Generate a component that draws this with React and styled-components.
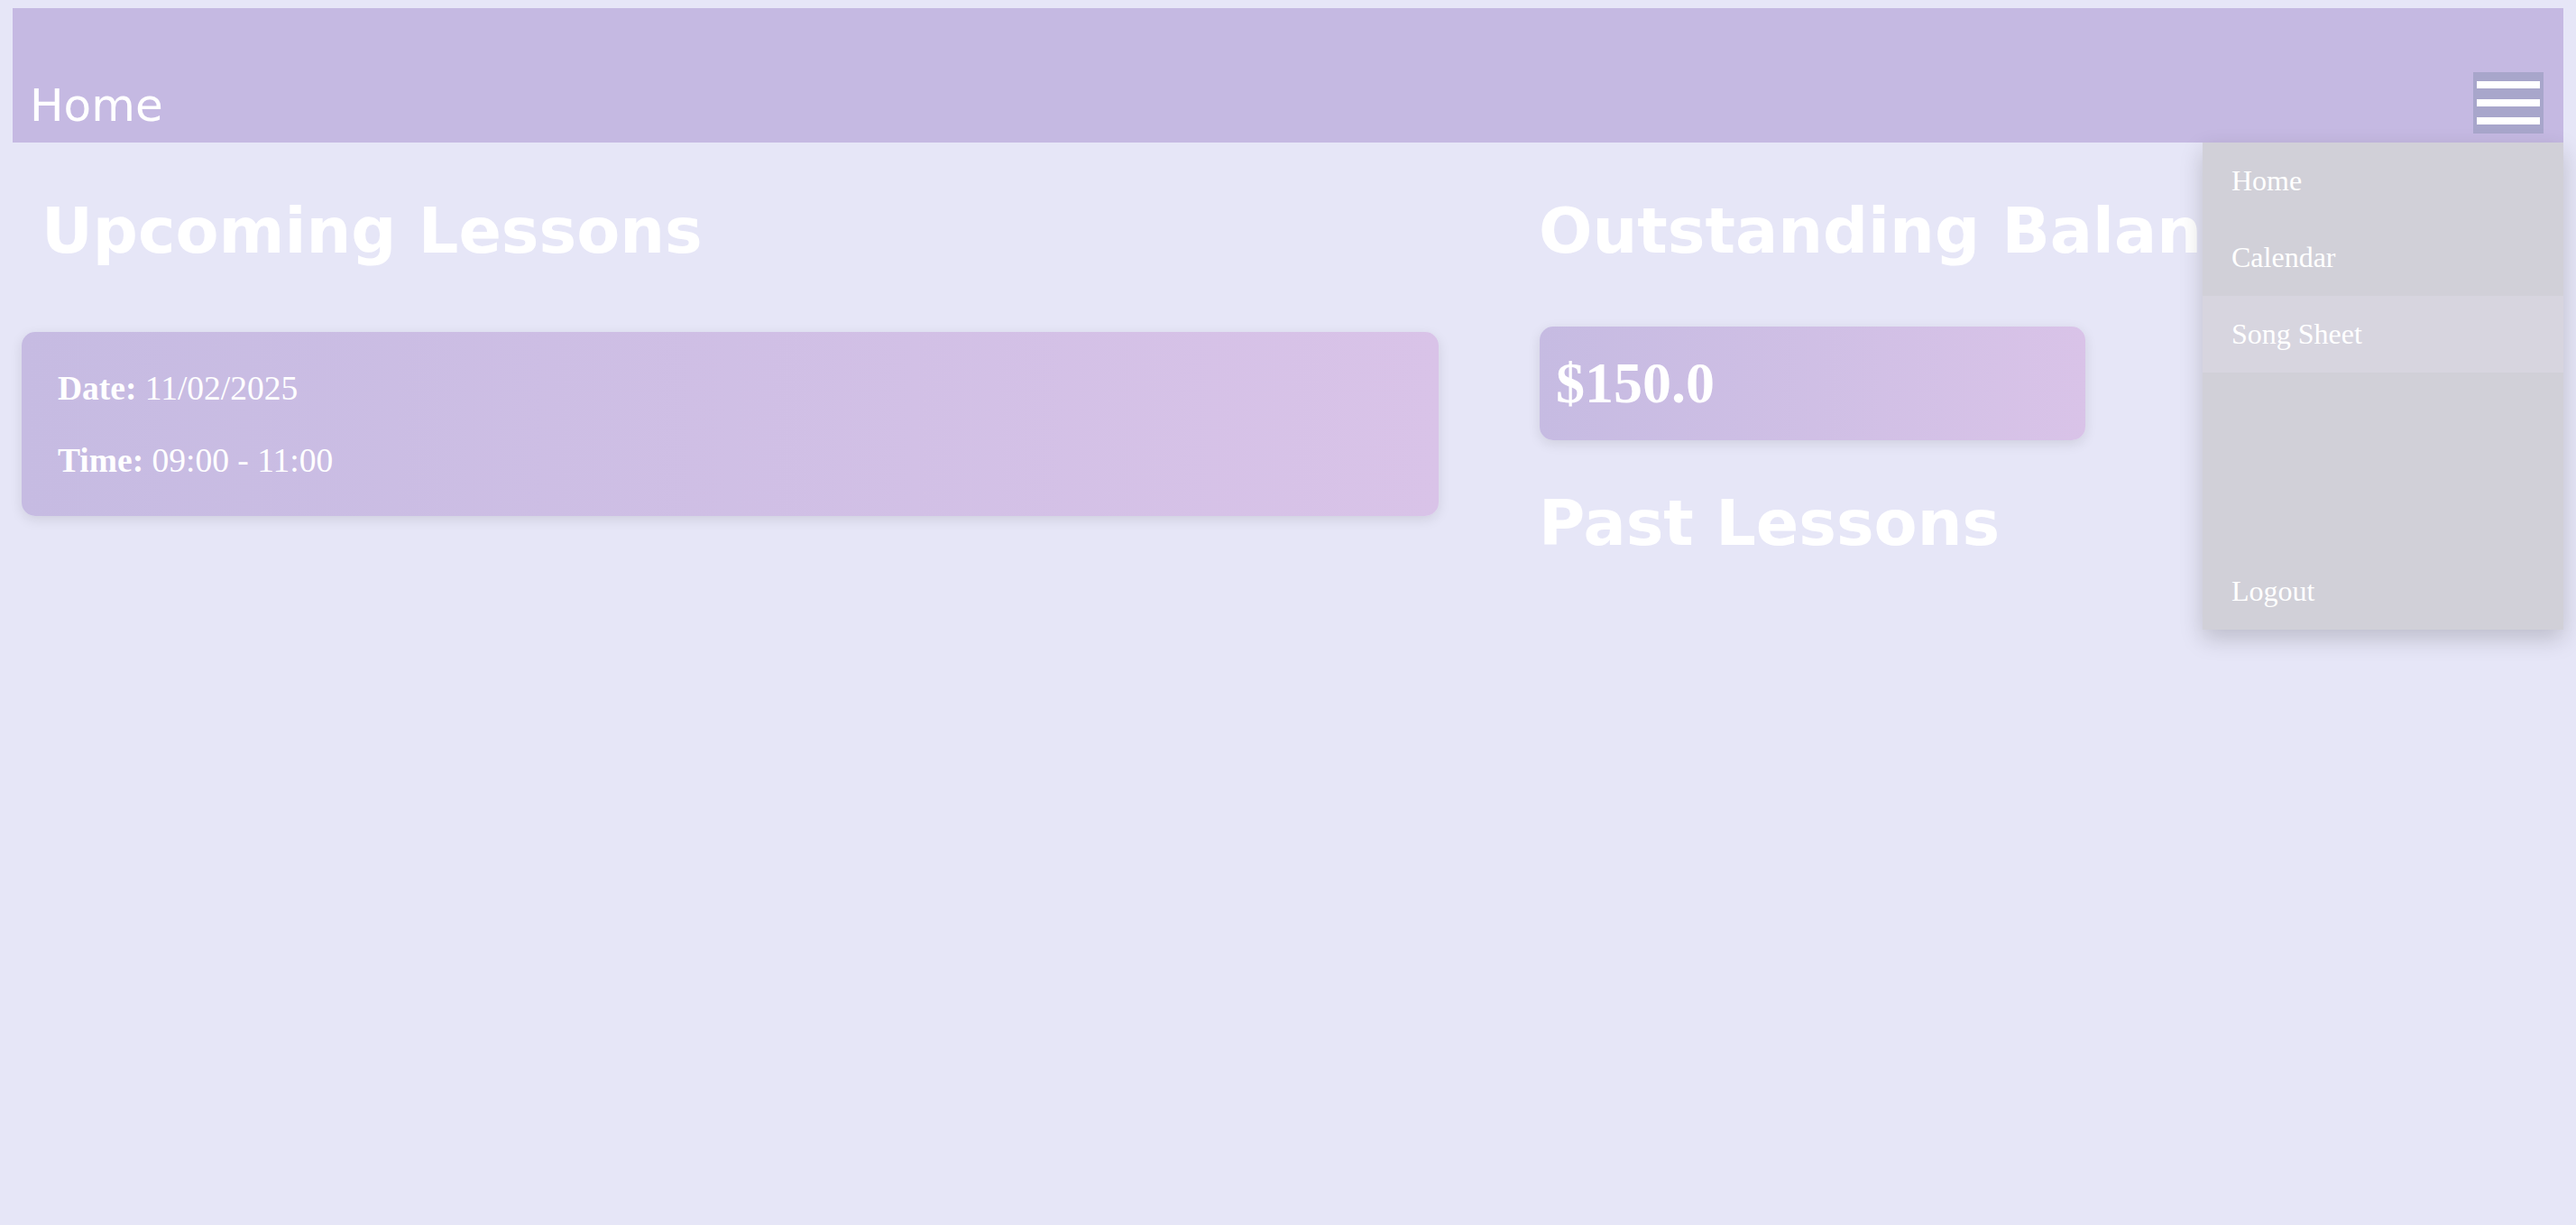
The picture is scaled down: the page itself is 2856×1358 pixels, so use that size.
import React, { useState } from 'react';
import styled, { createGlobalStyle } from 'styled-components';

const GlobalStyle = createGlobalStyle`
  html, body {
    margin: 0;
    padding: 0;
    background: #e6e6f7;
    min-height: 100vh;
  }
  body {
    font-family: "Liberation Serif", "Times New Roman", serif;
    color: white;
  }
`;

const menuItems = ['Home', 'Calendar', 'Song Sheet'];

const lessons = [
  { date: '11/02/2025', time: '09:00 - 11:00' },
];

export default function App() {
  const [hovered, setHovered] = useState('Song Sheet');

  return (
    <>
      <GlobalStyle />
      <Page>
        <Header>
          <Title>Home</Title>
          <MenuButton aria-label="menu">
            <Bar />
            <Bar />
            <Bar />
          </MenuButton>
          <Dropdown>
            {menuItems.map((item) => (
              <MenuItem
                key={item}
                $active={hovered === item}
                onMouseEnter={() => setHovered(item)}
              >
                {item}
              </MenuItem>
            ))}
            <MenuItem $bottom onMouseEnter={() => setHovered('Logout')} $active={hovered === 'Logout'}>
              Logout
            </MenuItem>
          </Dropdown>
        </Header>

        <Main>
          <Column>
            <Heading $indent>Upcoming Lessons</Heading>
            {lessons.map((l) => (
              <LessonCard key={l.date + l.time}>
                <LessonLine><b>Date:</b> {l.date}</LessonLine>
                <LessonLine><b>Time:</b> {l.time}</LessonLine>
              </LessonCard>
            ))}
          </Column>
          <Column>
            <Heading>Outstanding Balance</Heading>
            <BalanceCard>$150.0</BalanceCard>
            <Heading $top={51}>Past Lessons</Heading>
          </Column>
        </Main>
      </Page>
    </>
  );
}

const Page = styled.div`
  padding: 9px 14px 0;
  min-height: 100vh;
  box-sizing: border-box;
  overflow: hidden;
`;

const Header = styled.header`
  position: relative;
  display: flex;
  align-items: flex-end;
  justify-content: space-between;
  height: 149px;
  box-sizing: border-box;
  padding: 0 22px 10px 19px;
  background: #c5b9e2;
`;

const Title = styled.div`
  font-family: "DejaVu Sans", Verdana, sans-serif;
  font-size: 50px;
  line-height: normal;
  margin-bottom: 2px;
  color: white;
`;

const MenuButton = styled.button`
  display: flex;
  flex-direction: column;
  gap: 12px;
  width: 78px;
  height: 68px;
  box-sizing: border-box;
  padding: 10px 4px;
  border: none;
  background: #a8a6cb;
  cursor: pointer;
`;

const Bar = styled.span`
  display: block;
  width: 70px;
  height: 8px;
  background: white;
`;

const Dropdown = styled.nav`
  position: absolute;
  top: 100%;
  right: 0;
  width: 400px;
  height: 540px;
  display: flex;
  flex-direction: column;
  background: #d1d0d8;
  box-shadow: 0 10px 24px rgba(0, 0, 0, 0.18);
  z-index: 10;
`;

const MenuItem = styled.a`
  display: block;
  padding: 24px 32px;
  font-family: "Liberation Serif", "Times New Roman", serif;
  font-size: 32px;
  line-height: normal;
  color: white;
  background: ${(p) => (p.$active ? '#d7d5df' : 'transparent')};
  margin-top: ${(p) => (p.$bottom ? 'auto' : '0')};
  cursor: pointer;
`;

const Main = styled.main`
  display: grid;
  grid-template-columns: 1571px 1fr;
  column-gap: 111px;
  padding: 0 10px;
`;

const Column = styled.section`
  display: flex;
  flex-direction: column;
  align-items: flex-start;
  min-width: 0;
`;

const Heading = styled.h1`
  margin: ${(p) => p.$top ?? 57}px 0 0 ${(p) => (p.$indent ? 22 : 0)}px;
  font-family: "DejaVu Sans", Verdana, sans-serif;
  font-weight: bold;
  font-size: 70px;
  line-height: normal;
  white-space: nowrap;
  color: white;
`;

const LessonCard = styled.div`
  align-self: stretch;
  margin-top: 71px;
  padding: 4px 40px 3px;
  border-radius: 15px;
  background: linear-gradient(to right, #c6bbe2, #d9c3e8);
  box-shadow: 0 4px 14px rgba(0, 0, 0, 0.1);
`;

const LessonLine = styled.p`
  margin: 37px 0;
  font-size: 37.5px;
  line-height: normal;
`;

const BalanceCard = styled.div`
  width: 605px;
  box-sizing: border-box;
  margin: 65px 0 0 1px;
  padding: 26px 18px;
  border-radius: 15px;
  background: linear-gradient(to right, #c6bbe2, #d9c3e8);
  box-shadow: 0 4px 14px rgba(0, 0, 0, 0.1);
  font-size: 64px;
  font-weight: bold;
  line-height: normal;
`;
